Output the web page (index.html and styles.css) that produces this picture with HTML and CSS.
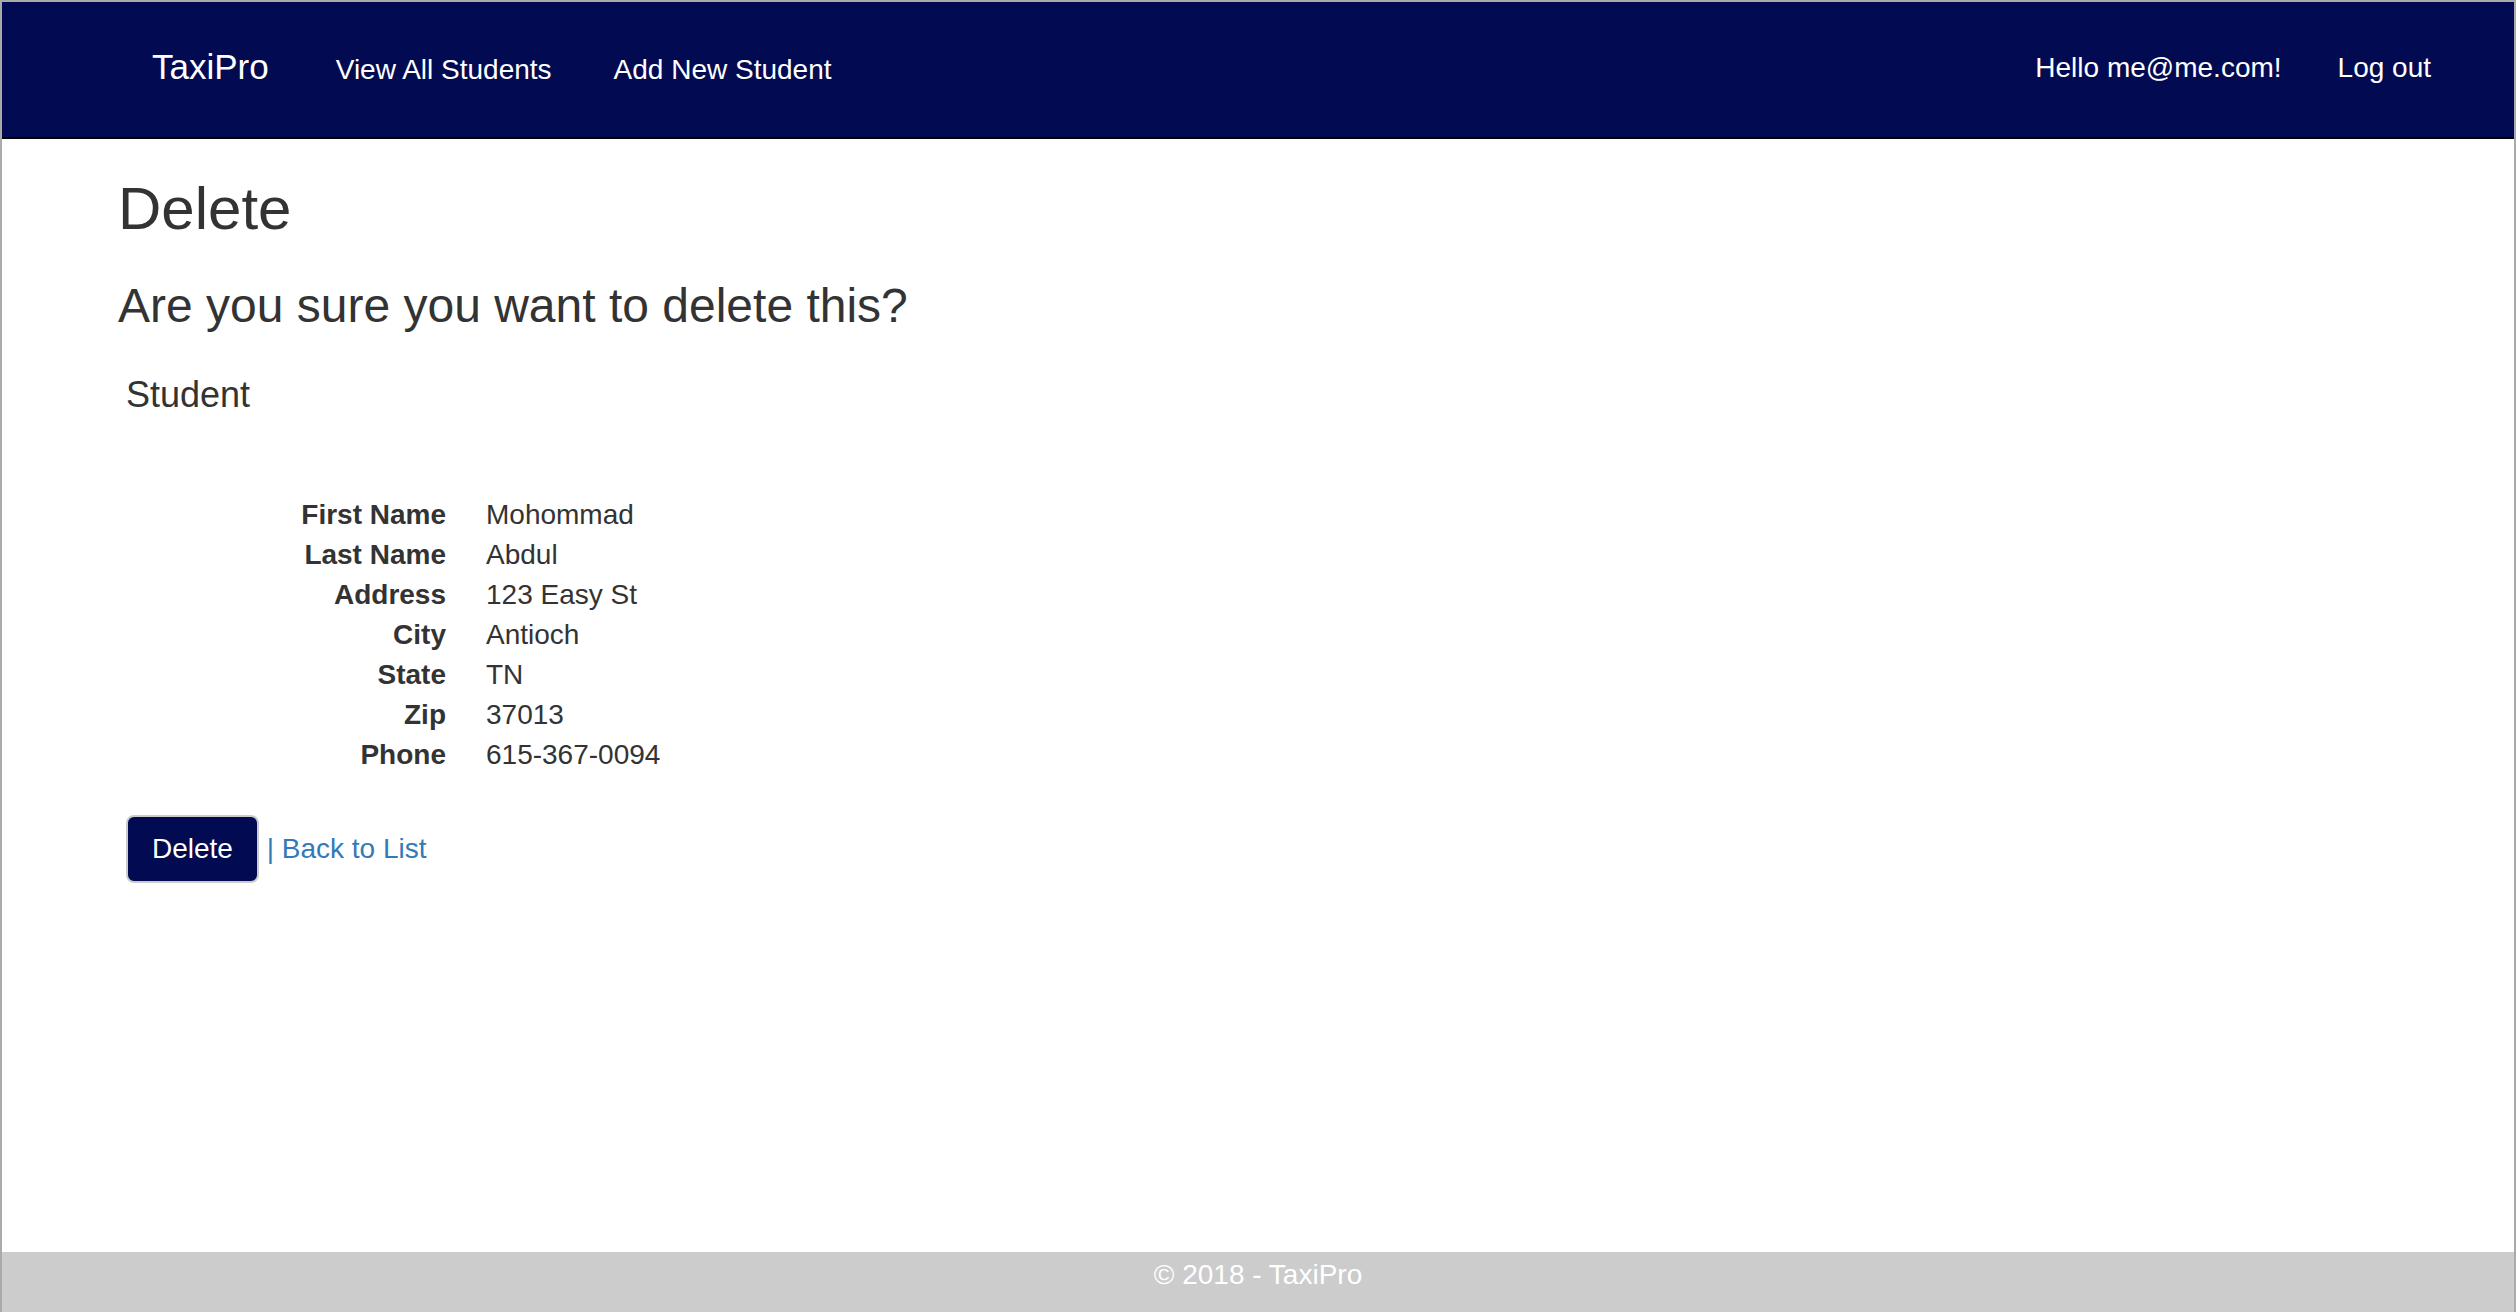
FILE: index.html
```html
<!DOCTYPE html>
<html lang="en">
<head>
<meta charset="utf-8">
<title>Delete - TaxiPro</title>
<link rel="stylesheet" href="styles.css">
</head>
<body>
<div class="page">
  <header class="navbar">
    <nav class="nav-left">
      <a class="brand" href="#">TaxiPro</a>
      <a class="nav-link" href="#">View All Students</a>
      <a class="nav-link" href="#">Add New Student</a>
    </nav>
    <nav class="nav-right">
      <a class="nav-link" href="#">Hello me@me.com!</a>
      <a class="nav-link" href="#">Log out</a>
    </nav>
  </header>
  <main class="content">
    <h2 class="title">Delete</h2>
    <h3 class="question">Are you sure you want to delete this?</h3>
    <div class="record">
      <h4 class="record-title">Student</h4>
      <dl class="details">
        <dt>First Name</dt><dd>Mohommad</dd>
        <dt>Last Name</dt><dd>Abdul</dd>
        <dt>Address</dt><dd>123 Easy St</dd>
        <dt>City</dt><dd>Antioch</dd>
        <dt>State</dt><dd>TN</dd>
        <dt>Zip</dt><dd>37013</dd>
        <dt>Phone</dt><dd>615-367-0094</dd>
      </dl>
      <form class="actions" onsubmit="return false;">
        <button class="btn" type="submit">Delete</button> <span class="sep">|</span> <a class="link" href="#">Back to List</a>
      </form>
    </div>
  </main>
  <footer class="footer">© 2018 - TaxiPro</footer>
</div>
</body>
</html>
```

FILE: styles.css
```css
* {
  box-sizing: border-box;
}

html, body {
  margin: 0;
  padding: 0;
  background: #fff;
}

body {
  font-family: "Liberation Sans", Arial, sans-serif;
  font-size: 28px;
  line-height: 40px;
  color: #333;
}

.page {
  height: 100vh;
  display: flex;
  flex-direction: column;
  border: 2px solid #aaa;
  border-bottom: none;
}

.navbar {
  flex: 0 0 auto;
  height: 137px;
  background: #020a52;
  border-bottom: 2px solid #000;
  display: flex;
  align-items: center;
  justify-content: space-between;
  padding: 0 83px 3px 150px;
}

.nav-left,
.nav-right {
  display: flex;
  align-items: baseline;
}

.nav-left {
  gap: 62px;
}

.nav-right {
  gap: 56px;
}

.navbar a {
  color: #fff;
  text-decoration: none;
}

.brand {
  font-size: 35px;
  margin-right: 5px;
}

.nav-link {
  font-size: 28px;
}

.content {
  flex: 1 1 auto;
  padding-left: 116px;
}

.title {
  font-size: 60px;
  font-weight: 400;
  line-height: 1.1;
  margin: 37px 0 38px;
}

.question {
  font-size: 48px;
  font-weight: 400;
  line-height: 1.1;
  margin: 0 0 40px;
}

.record {
  padding-left: 8px;
}

.record-title {
  font-size: 36px;
  font-weight: 400;
  line-height: 1.1;
  margin: 42px 0 0;
}

.question + .record .record-title {
  margin-top: 0;
  padding-top: 2px;
}

.details {
  display: grid;
  grid-template-columns: 320px 1fr;
  column-gap: 40px;
  row-gap: 0;
  margin: 81px 0 40px;
}

.details dt {
  font-weight: 700;
  text-align: right;
}

.details dd {
  margin: 0;
}

.actions {
  margin: 0;
}

.btn {
  font-family: inherit;
  font-size: 28px;
  line-height: 40px;
  padding: 12px 24px;
  color: #fff;
  background: #020a52;
  border: 2px solid #ccc;
  border-radius: 8px;
  cursor: pointer;
}

.sep,
.link {
  color: #337ab7;
  text-decoration: none;
}

.footer {
  flex: 0 0 60px;
  background: #ccc;
  color: #fff;
  text-align: center;
  line-height: 40px;
  padding-top: 3px;
}
```
